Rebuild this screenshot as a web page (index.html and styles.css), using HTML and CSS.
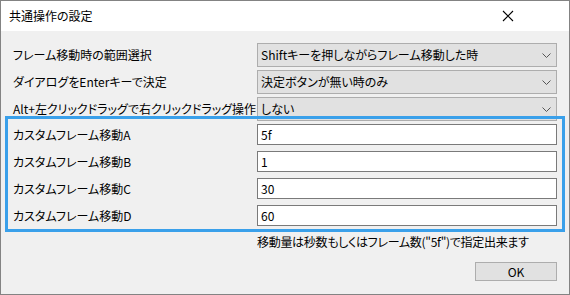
FILE: index.html
```html
<!DOCTYPE html>
<html lang="ja">
<head>
<meta charset="utf-8">
<link rel="stylesheet" href="styles.css">
</head>
<body>
<div class="window">
  <div class="titlebar">
    <span class="title">共通操作の設定</span>
    <svg class="close" width="12" height="12" viewBox="0 0 12 12"><path d="M1 1 L11 11 M11 1 L1 11" stroke="#000" stroke-width="1.1" fill="none"/></svg>
  </div>
  <div class="content">
    <div class="form">
      <div class="row combo-row">
        <span class="label">フレーム移動時の範囲選択</span>
        <div class="combo"><span>Shiftキーを押しながらフレーム移動した時</span><svg class="chev" width="9" height="5" viewBox="0 0 9 5"><path d="M0.5 0.5 L4.5 4.5 L8.5 0.5" stroke="#555" fill="none"/></svg></div>
      </div>
      <div class="row combo-row">
        <span class="label">ダイアログをEnterキーで決定</span>
        <div class="combo"><span>決定ボタンが無い時のみ</span><svg class="chev" width="9" height="5" viewBox="0 0 9 5"><path d="M0.5 0.5 L4.5 4.5 L8.5 0.5" stroke="#555" fill="none"/></svg></div>
      </div>
      <div class="row combo-row">
        <span class="label">Alt+左クリックドラッグで右クリックドラッグ操作</span>
        <div class="combo"><span>しない</span><svg class="chev" width="9" height="5" viewBox="0 0 9 5"><path d="M0.5 0.5 L4.5 4.5 L8.5 0.5" stroke="#555" fill="none"/></svg></div>
      </div>
      <div class="custom">
        <div class="row input-row">
          <span class="label">カスタムフレーム移動A</span>
          <div class="input">5f</div>
        </div>
        <div class="row input-row">
          <span class="label">カスタムフレーム移動B</span>
          <div class="input">1</div>
        </div>
        <div class="row input-row">
          <span class="label">カスタムフレーム移動C</span>
          <div class="input">30</div>
        </div>
        <div class="row input-row">
          <span class="label">カスタムフレーム移動D</span>
          <div class="input">60</div>
        </div>
      </div>
    </div>
    <div class="note">移動量は秒数もしくはフレーム数("5f")で指定出来ます</div>
    <div class="footer"><div class="button">OK</div></div>
  </div>
  <div class="highlight"></div>
</div>
</body>
</html>
```

FILE: styles.css
```css
html, body {
  margin: 0;
  padding: 0;
  background: #ffffff;
}
.window {
  position: relative;
  width: 570px;
  height: 295px;
  box-sizing: border-box;
  border: 1px solid #838383;
  background: #f0f0f0;
  font-family: "Noto Sans CJK JP", "Noto Sans", sans-serif;
  font-size: 12px;
  font-feature-settings: "palt";
  color: #000;
  display: flex;
  flex-direction: column;
}
.titlebar {
  height: 30px;
  background: #fff;
  display: flex;
  align-items: center;
  justify-content: space-between;
  padding: 0 55px 0 8px;
  flex-shrink: 0;
}
.title {
  font-size: 12px;
  line-height: 1;
}
.close {
  display: block;
}
.content {
  flex: 1;
  padding: 12px 12px 0 12px;
  display: flex;
  flex-direction: column;
}
.form {
  display: flex;
  flex-direction: column;
  gap: 3px;
}
.custom {
  display: flex;
  flex-direction: column;
  gap: 6px;
}
.row {
  display: flex;
  align-items: center;
  justify-content: space-between;
}
.combo-row { height: 24px; }
.input-row { height: 21px; }
.label {
  white-space: nowrap;
  line-height: 1;
}
.combo {
  width: 300px;
  height: 24px;
  box-sizing: border-box;
  border: 1px solid #adadad;
  background: #e1e1e1;
  display: flex;
  align-items: center;
  justify-content: space-between;
  padding: 0 5px 0 3px;
  line-height: 1;
}
.chev { display: block; }
.input {
  width: 300px;
  height: 21px;
  box-sizing: border-box;
  border: 1px solid #7a7a7a;
  background: #fff;
  display: flex;
  align-items: center;
  padding: 0 3px;
  line-height: 1;
}
.note {
  margin-top: 9px;
  margin-left: 244px;
  line-height: 14px;
  white-space: nowrap;
  letter-spacing: -0.3px;
}
.footer {
  display: flex;
  justify-content: flex-end;
  margin-top: 13px;
}
.button {
  width: 82px;
  height: 19px;
  box-sizing: border-box;
  border: 1px solid #adadad;
  background: #e1e1e1;
  display: flex;
  align-items: center;
  justify-content: center;
  line-height: 1;
}
.highlight {
  position: absolute;
  left: 4px;
  top: 115px;
  width: 560px;
  height: 116px;
  box-sizing: border-box;
  border: 3px solid #3aa0ea;
  pointer-events: none;
}
```
